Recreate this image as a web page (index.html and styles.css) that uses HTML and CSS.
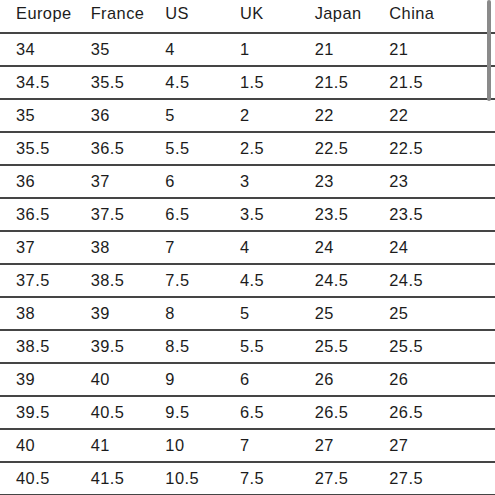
FILE: index.html
```html
<!DOCTYPE html>
<html>
<head>
<meta charset="utf-8">
<link rel="stylesheet" href="styles.css">
</head>
<body>
<div class="table">
  <div class="row head"><span>Europe</span><span>France</span><span>US</span><span>UK</span><span>Japan</span><span>China</span></div>
  <div class="row"><span>34</span><span>35</span><span>4</span><span>1</span><span>21</span><span>21</span></div>
  <div class="row"><span>34.5</span><span>35.5</span><span>4.5</span><span>1.5</span><span>21.5</span><span>21.5</span></div>
  <div class="row"><span>35</span><span>36</span><span>5</span><span>2</span><span>22</span><span>22</span></div>
  <div class="row"><span>35.5</span><span>36.5</span><span>5.5</span><span>2.5</span><span>22.5</span><span>22.5</span></div>
  <div class="row"><span>36</span><span>37</span><span>6</span><span>3</span><span>23</span><span>23</span></div>
  <div class="row"><span>36.5</span><span>37.5</span><span>6.5</span><span>3.5</span><span>23.5</span><span>23.5</span></div>
  <div class="row"><span>37</span><span>38</span><span>7</span><span>4</span><span>24</span><span>24</span></div>
  <div class="row"><span>37.5</span><span>38.5</span><span>7.5</span><span>4.5</span><span>24.5</span><span>24.5</span></div>
  <div class="row"><span>38</span><span>39</span><span>8</span><span>5</span><span>25</span><span>25</span></div>
  <div class="row"><span>38.5</span><span>39.5</span><span>8.5</span><span>5.5</span><span>25.5</span><span>25.5</span></div>
  <div class="row"><span>39</span><span>40</span><span>9</span><span>6</span><span>26</span><span>26</span></div>
  <div class="row"><span>39.5</span><span>40.5</span><span>9.5</span><span>6.5</span><span>26.5</span><span>26.5</span></div>
  <div class="row"><span>40</span><span>41</span><span>10</span><span>7</span><span>27</span><span>27</span></div>
  <div class="row"><span>40.5</span><span>41.5</span><span>10.5</span><span>7.5</span><span>27.5</span><span>27.5</span></div>
</div>
<div class="scrollbar"></div>
</body>
</html>
```
FILE: styles.css
```css
html, body {
  margin: 0;
  padding: 0;
  background: #fff;
  overflow: hidden;
}
body {
  font-family: "Liberation Sans", Arial, sans-serif;
  font-size: 16.4px;
  letter-spacing: 0.45px;
  color: #1c1c1c;
}
.table {
  display: flex;
  flex-direction: column;
}
.row {
  display: grid;
  grid-template-columns: repeat(6, 74.67px);
  align-items: center;
  padding-left: 16px;
  height: 31px;
  border-bottom: 2px solid #454545;
}
.row.head {
  height: 26px;
  padding-bottom: 6px;
}
.scrollbar {
  position: absolute;
  top: 0;
  left: 487px;
  width: 4px;
  height: 101px;
  background: #8a8a8a;
  border-radius: 2px;
}
```
